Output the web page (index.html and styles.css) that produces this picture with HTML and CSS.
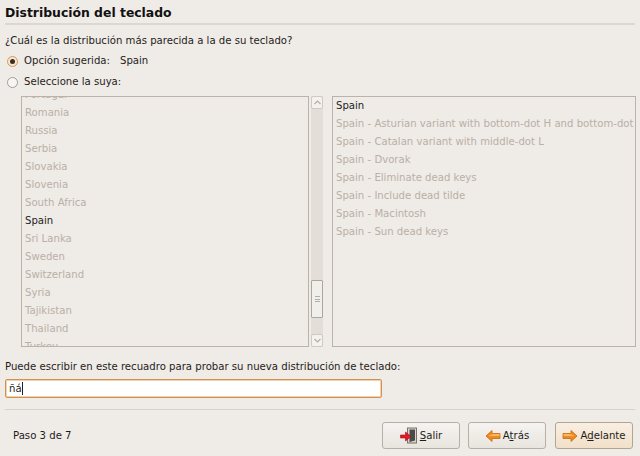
FILE: index.html
```html
<!DOCTYPE html>
<html lang="es">
<head>
<meta charset="utf-8">
<title>Distribución del teclado</title>
<link rel="stylesheet" href="styles.css">
</head>
<body>
<div class="page">
  <h1 class="title">Distribución del teclado</h1>
  <div class="rule"></div>
  <p class="question">¿Cuál es la distribución más parecida a la de su teclado?</p>
  <div class="option first"><span class="radio checked"></span><span class="opt-label">Opción sugerida:</span><span class="opt-value">Spain</span></div>
  <div class="option second"><span class="radio"></span><span class="opt-label">Seleccione la suya:</span></div>
  <div class="lists">
    <div class="listbox left">
      <ul class="items scrolled">
        <li>Portugal</li><li>Romania</li><li>Russia</li><li>Serbia</li><li>Slovakia</li><li>Slovenia</li><li>South Africa</li><li class="sel">Spain</li><li>Sri Lanka</li><li>Sweden</li><li>Switzerland</li><li>Syria</li><li>Tajikistan</li><li>Thailand</li><li>Turkey</li>
      </ul>
    </div>
    <div class="scrollbar">
      <div class="step"><svg width="7" height="5" viewBox="0 0 7 5"><path d="M.5 4 3.500 1l3 3" fill="none" stroke="#b5aea5" stroke-width="1.2"/></svg></div>
      <div class="track"><div class="thumb"><span class="grip"></span></div></div>
      <div class="step"><svg width="7" height="5" viewBox="0 0 7 5"><path d="M.5 1l3 3 3-3" fill="none" stroke="#b5aea5" stroke-width="1.2"/></svg></div>
    </div>
    <div class="listbox right">
      <ul class="items">
        <li class="sel">Spain</li><li>Spain - Asturian variant with bottom-dot H and bottom-dot L</li><li>Spain - Catalan variant with middle-dot L</li><li>Spain - Dvorak</li><li>Spain - Eliminate dead keys</li><li>Spain - Include dead tilde</li><li>Spain - Macintosh</li><li>Spain - Sun dead keys</li>
      </ul>
    </div>
  </div>
  <p class="hint">Puede escribir en este recuadro para probar su nueva distribución de teclado:</p>
  <div class="entry"><span>ñá</span><span class="caret"></span></div>
  <div class="rule lower"></div>
  <div class="footer">
    <span class="step-text">Paso 3 de 7</span>
    <div class="buttons">
      <div class="btn">
        <svg width="18" height="18" viewBox="0 0 18 18"><rect x="7.500" y="1" width="9" height="15" fill="#d8d4cc" stroke="#77736a"/><path d="M9.500 2.500h5.500v11l-5.500 1.500z" fill="#4a4a48"/><path d="M.5 8h5V5l5.500 4.500L5.500 14v-3h-5z" fill="#e01b24" stroke="#a40f16" stroke-width=".6"/></svg>
        <span><u>S</u>alir</span>
      </div>
      <div class="btn">
        <svg width="16" height="14" viewBox="0 0 16 14"><path d="M1 7l6-5.500V4.500h8v5H7v3z" fill="#f08a1d" stroke="#c46a10" stroke-width=".8"/><path d="M7.500 5H14.500V7H3.500z" fill="#f9b766"/></svg>
        <span>A<u>t</u>rás</span>
      </div>
      <div class="btn hot">
        <svg width="16" height="14" viewBox="0 0 16 14"><path d="M15 7L9 1.500V4.500H1v5h8v3z" fill="#f08a1d" stroke="#c46a10" stroke-width=".8"/><path d="M8.500 5H1.500V7H12.500z" fill="#f9b766"/></svg>
        <span>A<u>d</u>elante</span>
      </div>
    </div>
  </div>
</div>
</body>
</html>
```
FILE: styles.css
```css
* { box-sizing: border-box; }
html, body { margin: 0; padding: 0; }
body {
  width: 640px;
  height: 456px;
  overflow: hidden;
  background: #efebe7;
  color: #1f1d1a;
  font-family: "DejaVu Sans", sans-serif;
  font-size: 10.15px;
  line-height: 14px;
}
.page { display: flex; flex-direction: column; padding: 5px 0 0 5px; height: 456px; }
.title { margin: 0; font-size: 12.4px; line-height: 16px; font-weight: bold; color: #111; }
.rule { height: 2px; margin: 2px 0 0; width: 630px; background: #dcd7d0; }
.question { margin: 9px 0 0; }
.option { display: flex; align-items: center; height: 16px; }
.option.first { margin-top: 5px; }
.option.second { margin-top: 5px; }
.radio {
  width: 11px; height: 11px; margin: 0 6px 0 2px; border-radius: 50%;
  border: 1px solid #a39c92; background: #f8f6f4; display: flex; align-items: center; justify-content: center;
}
.radio.checked { border-color: #d29a5c; background: #f7e6d0; }
.radio.checked::after { content: ""; width: 5px; height: 5px; border-radius: 50%; background: #3b2f20; }
.opt-value { margin-left: 10px; }
.lists { display: flex; margin: 6px 0 0 16px; height: 251px; }
.listbox { border: 1px solid #bcb3a8; overflow: hidden; background: #efebe7; white-space: nowrap; }
.left { width: 288px; }
.right { width: 304px; margin-left: 9px; }
.items { list-style: none; margin: 0; padding: 0; color: #b9b0a6; }
.items li { height: 18px; line-height: 18px; padding-left: 3px; }
.items.scrolled { margin-top: -11px; }
.items li.sel { color: #1f1d1a; }
.right .items { margin-top: 0; }
.scrollbar { width: 12px; margin-left: 2px; display: flex; flex-direction: column; background: #e3ded8; }
.step { height: 13px; display: flex; align-items: center; justify-content: center; background: #f4f2ef; border: 1px solid #cfc9c1; border-radius: 2px; }
.track { flex: 1; display: flex; flex-direction: column; justify-content: flex-end; }
.thumb { height: 38px; margin-bottom: 16px; background: #f1efec; border: 1px solid #aca69d; border-radius: 1px; display: flex; align-items: center; justify-content: center; }
.grip { width: 5px; height: 6px; border-top: 1px solid #b3ada4; border-bottom: 1px solid #b3ada4; background: linear-gradient(#b3ada4, #b3ada4) center / 100% 1px no-repeat; }
.hint { margin: 13px 0 0; }
.entry {
  margin-top: 5px; width: 377px; height: 19px; padding: 0 3px;
  display: flex; align-items: center; line-height: 14px;
  background: #fff; border: 1px solid #d2924e; border-radius: 2px; box-shadow: inset 0 0 0 1px #f0d2b0;
}
.caret { width: 1px; height: 13px; background: #222; }
.rule.lower { height: 1px; margin-top: 11px; background: #d6d1ca; }
.footer { display: flex; align-items: center; justify-content: space-between; margin-top: 12px; }
.step-text { margin-left: 8px; }
.buttons { display: flex; gap: 8px; margin-right: 7px; }
.btn {
  display: flex; align-items: center; justify-content: center; gap: 2px;
  width: 78px; height: 27px; border: 1px solid #b5afa6; border-radius: 3px;
  background: linear-gradient(#f6f4f1, #e8e4de);
}
.btn + .btn + .btn { margin-left: 1px; }
.btn.hot { background: linear-gradient(#f8efe4, #f2e0c9); border-color: #b3a68f; }
.btn u { text-decoration: underline; }
```
